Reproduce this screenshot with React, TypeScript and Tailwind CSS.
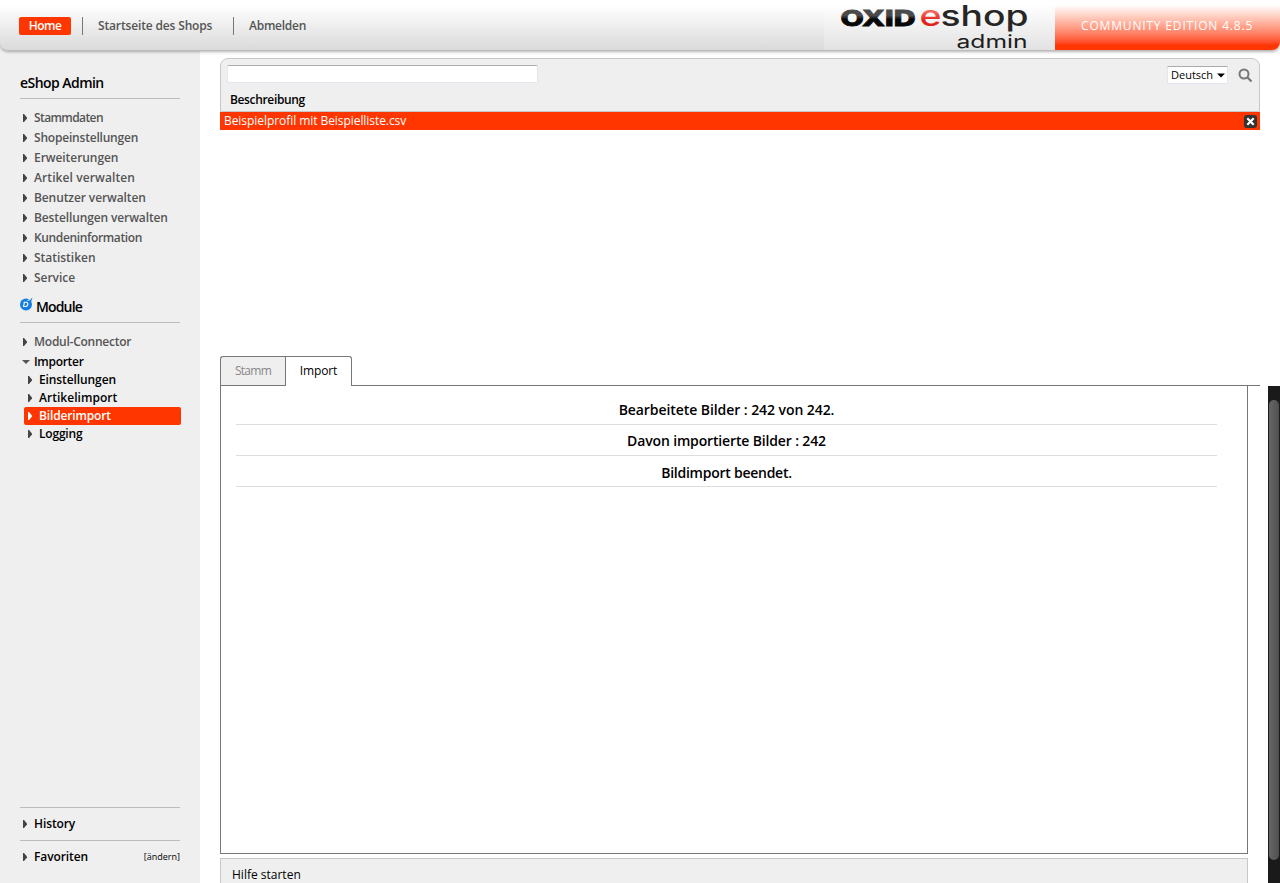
import React from "react";

const mainItems = [
  { label: "Stammdaten", cls: "tracking-[-0.6px]" },
  { label: "Shopeinstellungen", cls: "tracking-[-0.2px]" },
  { label: "Erweiterungen", cls: "tracking-[-0.06px]" },
  { label: "Artikel verwalten", cls: "tracking-[0.1px]" },
  { label: "Benutzer verwalten", cls: "tracking-[-0.1px]" },
  { label: "Bestellungen verwalten", cls: "tracking-[-0.12px]" },
  { label: "Kundeninformation", cls: "tracking-[-0.36px]" },
  { label: "Statistiken", cls: "tracking-[-0.02px]" },
  { label: "Service", cls: "tracking-[-0.04px]" },
];

const subItems = [
  { label: "Einstellungen", active: false, cls: "tracking-[-0.1px]" },
  { label: "Artikelimport", active: false, cls: "tracking-[0.04px]" },
  { label: "Bilderimport", active: true, cls: "tracking-[-0.15px]" },
  { label: "Logging", active: false, cls: "tracking-[-0.2px]" },
];

const messages = [
  { text: "Bearbeitete Bilder : 242 von 242.", cls: "h-[29px] tracking-[-0.07px]" },
  { text: "Davon importierte Bilder : 242", cls: "h-[31px] pt-[2px] tracking-[-0.15px]" },
  { text: "Bildimport beendet.", cls: "h-[31px] pt-[3px] tracking-[-0.25px]" },
];

function Arrow({ className }: { className: string }) {
  return (
    <svg width="4" height="8" viewBox="0 0 4 8" className={className} fill="currentColor">
      <path d="M0 0 L1 0 L4 3.500 L4 4.500 L1 8 L0 8 Z" />
    </svg>
  );
}

function Item({ label, cls }: { label: string; cls: string }) {
  return (
    <li className="flex h-5 items-center pl-[3px]">
      <Arrow className="mr-[7px] text-[#444]" />
      <span className={cls}>{label}</span>
    </li>
  );
}

function Header() {
  return (
    <header className="z-10 flex h-[51px] shrink-0 rounded-b-[8px] border-b border-[#bcbcbc] bg-linear-to-b from-white from-10% to-[#dadada] shadow-[0_1px_3px_rgba(0,0,0,0.3)]">
      <nav className="mt-[17px] flex h-[18px] flex-1 items-center pl-[19px] text-[12px] font-semibold leading-[18px] text-[#555]">
        <span className="w-[52px] rounded-[2px] bg-[#ff3600] text-center tracking-[-0.5px] text-white">Home</span>
        <span className="ml-[11px] h-[18px] w-px bg-[#777]" />
        <span className="ml-[15px] w-[135px] whitespace-nowrap tracking-[-0.15px]">Startseite des Shops</span>
        <span className="h-[18px] w-px bg-[#777]" />
        <span className="ml-[15px] tracking-[-0.25px]">Abmelden</span>
      </nav>
      <div className="w-[231px] bg-linear-to-b from-white from-10% to-[#e2e2e2]">
        <svg width="231" height="50" viewBox="0 0 231 50" className="overflow-visible" fontFamily="Inter, Liberation Sans, sans-serif">
          <defs>
            <linearGradient id="ink" x1="0" y1="0" x2="0" y2="1">
              <stop offset="0.4" stopColor="#4a4a4a" />
              <stop offset="0.55" stopColor="#080808" />
            </linearGradient>
            <linearGradient id="red" x1="0" y1="0" x2="0" y2="1">
              <stop offset="0.4" stopColor="#f0685e" />
              <stop offset="0.65" stopColor="#e2231a" />
            </linearGradient>
          </defs>
          <text x="16.500" y="25.500" fontSize="21" fontWeight="800" fill="url(#ink)" stroke="url(#ink)" strokeWidth="0.8" textLength="75" lengthAdjust="spacingAndGlyphs">OXID</text>
          <text x="95.500" y="25.500" fontSize="28" fontWeight="500" fill="url(#red)" textLength="22" lengthAdjust="spacingAndGlyphs">e</text>
          <text x="116.500" y="25.500" fontSize="28" fontWeight="500" fill="#262626" textLength="88" lengthAdjust="spacingAndGlyphs">shop</text>
          <text x="132.500" y="47.500" fontSize="18" fontWeight="400" fill="#1c1c1c" textLength="71" lengthAdjust="spacingAndGlyphs">admin</text>
        </svg>
      </div>
      <div className="flex w-[225px] items-start rounded-br-[8px] bg-linear-to-b from-white from-10% to-[#ff3600] to-90% pl-[26px] pt-[17px]">
        <span className="whitespace-nowrap text-[12px] font-medium leading-[18px] tracking-[0.83px] text-white">COMMUNITY EDITION 4.8.5</span>
      </div>
    </header>
  );
}

function Sidebar() {
  return (
    <aside className="-mt-2 flex w-[200px] shrink-0 flex-col bg-[#efefef] px-5 pt-2 text-[12px] font-semibold leading-[18px] text-[#555]">
      <h2 className="mt-[21px] h-[27px] border-b border-[#bbb] text-[14px] leading-[21px] tracking-[-0.55px] text-black">eShop Admin</h2>
      <ul className="mt-[9px]">
        {mainItems.map((i) => <Item key={i.label} {...i} />)}
      </ul>
      <h2 className="mt-2 flex h-[27px] border-b border-[#bbb] text-[14px] leading-[21px] tracking-[-0.85px] text-black">
        <svg width="13" height="14" viewBox="0 0 13 14" className="mr-[3px] mt-px">
          <circle cx="6" cy="7.500" r="6" fill="#147fe2" />
          <path d="M8.500 4 L12.500 0.500 L11 5 Z" fill="#147fe2" />
          <path d="M4.300 5.300 H6.300 C8.700 5.300 8.200 9.500 5.500 9.500 H3.600 Z" fill="none" stroke="#fff" strokeWidth="1.100" />
          <path d="M7.500 3.500 Q9.500 3.500 11 1.500" fill="none" stroke="#e8f5ff" strokeWidth="1" />
        </svg>
        Module
      </h2>
      <ul className="mt-[9px]">
        <Item label="Modul-Connector" cls="tracking-[-0.25px]" />
        <li className="flex h-5 items-center pl-[2px] tracking-[-0.3px] text-black">
          <svg width="8" height="4" viewBox="0 0 8 4" className="mr-[4px]" fill="#555"><path d="M0 0 H8 L4 4 Z" /></svg>
          Importer
        </li>
      </ul>
      <ul className="-mr-px -mt-px ml-1 text-black">
        {subItems.map((i) => (
          <li key={i.label} className={i.active ? "flex h-[18px] items-center rounded-[2px] bg-[#ff3600] pl-1 text-white" : "flex h-[18px] items-center pl-1"}>
            <Arrow className={i.active ? "mr-[7px] text-white" : "mr-[7px] text-[#444]"} />
            <span className={i.cls}>{i.label}</span>
          </li>
        ))}
      </ul>
      <div className="mt-auto flex h-[33px] items-center border-t border-[#bbb] pl-[3px] tracking-[-0.1px] text-black">
        <Arrow className="mr-[7px] text-[#444]" />History
      </div>
      <div className="flex h-[43px] items-start border-t border-[#bbb] pl-[3px] pt-[7px] text-black">
        <Arrow className="mr-[7px] mt-[5px] text-[#444]" />
        <span className="flex-1 tracking-[-0.1px]">Favoriten</span>
        <span className="text-[9px] font-medium">[ändern]</span>
      </div>
    </aside>
  );
}

function ProfileList() {
  return (
    <section className="mr-5 h-[298px] shrink-0 text-[12px]">
      <div className="h-[54px] rounded-t-[8px] border border-[#c8c8c8] bg-[#efefef]">
        <div className="flex pl-1.5 pr-[6px] pt-1.5">
          <input className="h-[18px] w-[311px] rounded-[2px] border border-[#e3e6ee] border-t-[#ababab] bg-white" />
          <div className="ml-auto mt-px flex h-[18px] w-[61px] items-center justify-between rounded-[1px] border border-[#e3e6ee] border-t-[#ababab] bg-white px-[3px] text-[11px] font-medium leading-4 text-black">
            Deutsch
            <svg width="8" height="5" viewBox="0 0 8 5" className="-mr-px mt-px"><path d="M0 0.500 H8 L4 4.500 Z" /></svg>
          </div>
          <svg width="15" height="15" viewBox="0 0 15 15" className="ml-[10px] mt-[3px]" fill="none" stroke="#777">
            <circle cx="6" cy="6" r="4.500" strokeWidth="2" />
            <path d="M9.300 9.300 L13.500 13.500" strokeWidth="2.200" />
          </svg>
        </div>
        <div className="mt-[7px] pl-[9px] font-semibold leading-[18px] tracking-[-0.35px] text-black">Beschreibung</div>
      </div>
      <div className="flex h-[18px] items-center justify-between bg-[#ff3600] pl-1 pr-[3px] text-white">
        <span className="tracking-[-0.06px]">Beispielprofil mit Beispielliste.csv</span>
        <svg width="13" height="13" viewBox="0 0 13 13">
          <rect width="13" height="13" rx="3" fill="#333" />
          <path d="M3.300 3.300 L9.700 9.700 M9.700 3.300 L3.300 9.700" stroke="#fff" strokeWidth="2.200" />
        </svg>
      </div>
    </section>
  );
}

function Details() {
  return (
    <section className="flex min-h-0 flex-1 flex-col">
      <div className="mr-5 flex h-[30px] shrink-0 text-center text-[12px] leading-[28px]">
        <div className="w-[65px] rounded-tl-[3px] border border-r-0 border-[#777] bg-[#efefef] tracking-[-0.7px] text-[#888]">Stamm</div>
        <div className="w-[67px] rounded-tr-[3px] border border-b-0 border-[#777] font-medium tracking-[-0.1px] text-black">Import</div>
        <div className="flex-1 border-b border-[#777]" />
      </div>
      <div className="flex min-h-0 flex-1">
        <div className="mr-5 flex w-[1028px] flex-col">
          <div className="h-[468px] shrink-0 border border-t-0 border-[#777] pl-[15px] pr-[30px] pt-[10px] text-center text-[14px] font-semibold leading-[28px] text-black">
            {messages.map((m) => (
              <p key={m.text} className={"border-b border-[#ddd] " + m.cls}>{m.text}</p>
            ))}
          </div>
          <div className="mt-1 flex-1 border border-b-0 border-[#c8c8c8] bg-[#efefef] pl-[11px] pt-[7px] text-[12px] font-medium leading-[18px] text-black">Hilfe starten</div>
        </div>
        <div className="w-3 bg-[#1a1a1a] px-px pt-[14px]">
          <div className="h-[460px] rounded-full bg-linear-to-r from-[#666] to-[#505050]" />
        </div>
      </div>
    </section>
  );
}

export default function App() {
  return (
    <div className="flex h-[883px] w-[1280px] flex-col overflow-hidden bg-white font-['Open_Sans','Noto_Sans',sans-serif]">
      <Header />
      <div className="flex min-h-0 flex-1">
        <Sidebar />
        <main className="flex min-h-0 flex-1 flex-col pl-5 pt-[7px]">
          <ProfileList />
          <Details />
        </main>
      </div>
    </div>
  );
}
